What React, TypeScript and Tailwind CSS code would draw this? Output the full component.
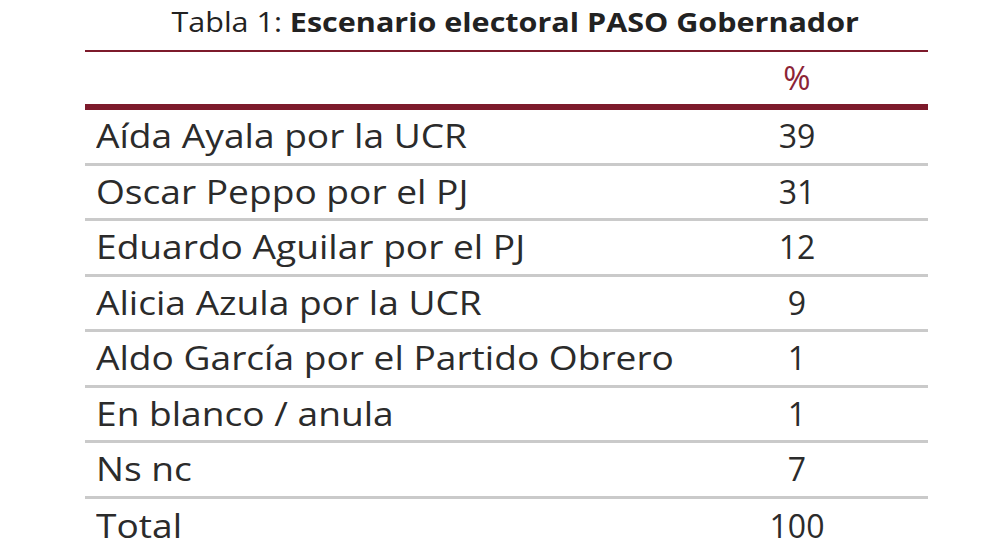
const rows = [
  { label: "Aída Ayala por la UCR", value: "39" },
  { label: "Oscar Peppo por el PJ", value: "31" },
  { label: "Eduardo Aguilar por el PJ", value: "12" },
  { label: "Alicia Azula por la UCR", value: "9" },
  { label: "Aldo García por el Partido Obrero", value: "1" },
  { label: "En blanco / anula", value: "1" },
  { label: "Ns nc", value: "7" },
  { label: "Total", value: "100" },
];

export default function App() {
  return (
    <div
      className="w-[1000px] h-[542px] overflow-hidden bg-white text-[#2b2b2b]"
      style={{ fontFamily: '"Open Sans", "Liberation Sans", sans-serif' }}
    >
      <div className="ml-[85px] w-[843px]">
        {/* Title */}
        <div className="flex h-[50px] justify-center pt-[4px] pl-[18px]">
          <div className="scale-x-[1.13] whitespace-nowrap text-[27px] leading-[36px] text-[#222]">
            Tabla 1: <span className="font-bold">Escenario electoral PASO Gobernador</span>
          </div>
        </div>

        {/* Header */}
        <div className="border-t-2 border-b-[6px] border-[#7d1a2b]">
          <div className="flex h-[52px] items-center">
            <div className="flex-1" />
            <div className="w-[262px] text-center text-[33px] text-[#8c2436]">%</div>
          </div>
        </div>

        {/* Body */}
        <div>
          {rows.map((row, i) => (
            <div
              key={row.label}
              className={
                "flex h-[55.5px] items-center " +
                (i < rows.length - 1 ? "border-b-[3px] border-[#cacaca]" : "")
              }
            >
              <div className="flex-1 pl-[11px]">
                <div className="origin-left scale-x-[1.16] whitespace-nowrap text-[32px] leading-none">
                  {row.label}
                </div>
              </div>
              <div className="w-[262px] text-center text-[32px] leading-none">{row.value}</div>
            </div>
          ))}
        </div>
      </div>
    </div>
  );
}
